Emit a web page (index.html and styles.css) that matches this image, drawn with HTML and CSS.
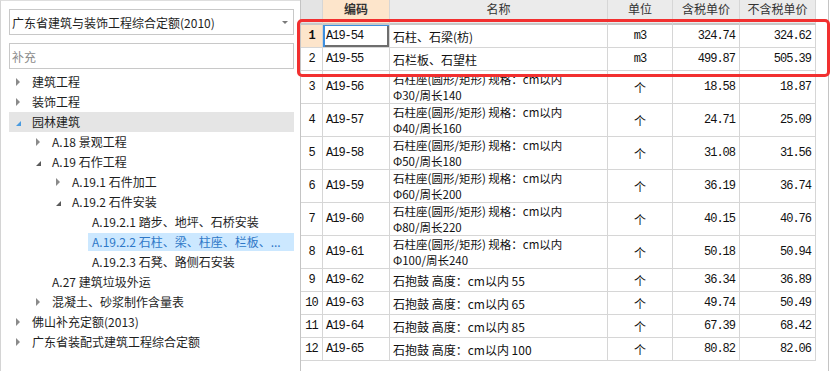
FILE: index.html
```html
<!DOCTYPE html>
<html lang="zh-CN">
<head>
    <meta charset="UTF-8">
    <link rel="stylesheet" href="styles.css">
    <title>定额库</title>
</head>
<body>
    <div class="app">
        <!-- left: quota library tree -->
        <div class="side">
            <div class="select">
                <span>广东省建筑与装饰工程综合定额(2010)</span>
                <span class="caret"></span>
            </div>
            <input class="search" type="text" placeholder="补充">
            <ul class="tree">
                <li class="node lv0"><span class="tw closed"></span><span class="label">建筑工程</span></li>
                <li class="node lv0"><span class="tw closed"></span><span class="label">装饰工程</span></li>
                <li class="node lv0 hover"><span class="tw open"></span><span class="label">园林建筑</span></li>
                <li class="node lv1"><span class="tw closed"></span><span class="label">A.18 景观工程</span></li>
                <li class="node lv1"><span class="tw open"></span><span class="label">A.19 石作工程</span></li>
                <li class="node lv2"><span class="tw closed"></span><span class="label">A.19.1 石件加工</span></li>
                <li class="node lv2"><span class="tw open"></span><span class="label">A.19.2 石件安装</span></li>
                <li class="node lv3"><span class="tw"></span><span class="label">A.19.2.1 踏步、地坪、石桥安装</span></li>
                <li class="node lv3 selected"><span class="tw"></span><span class="label">A.19.2.2 石柱、梁、柱座、栏板、...</span></li>
                <li class="node lv3"><span class="tw"></span><span class="label">A.19.2.3 石凳、路侧石安装</span></li>
                <li class="node lv1"><span class="tw"></span><span class="label">A.27 建筑垃圾外运</span></li>
                <li class="node lv1"><span class="tw closed"></span><span class="label">混凝土、砂浆制作含量表</span></li>
                <li class="node lv0"><span class="tw closed"></span><span class="label">佛山补充定额(2013)</span></li>
                <li class="node lv0"><span class="tw closed"></span><span class="label">广东省装配式建筑工程综合定额</span></li>
            </ul>
        </div>

        <!-- right: quota items grid -->
        <div class="main">
            <div class="row head">
                <div class="cell"></div>
                <div class="cell sorted"><span>编码</span></div>
                <div class="cell"><span>名称</span></div>
                <div class="cell"><span>单位</span></div>
                <div class="cell"><span>含税单价</span></div>
                <div class="cell"><span>不含税单价</span></div>
            </div>
            <div class="row current">
                <div class="cell no mono">1</div>
                <div class="cell code mono focus">A19-54</div>
                <div class="cell name">石柱、石梁(枋)</div>
                <div class="cell unit mono">m3</div>
                <div class="cell price mono">324.74</div>
                <div class="cell price mono">324.62</div>
            </div>
            <div class="row">
                <div class="cell no mono">2</div>
                <div class="cell code mono">A19-55</div>
                <div class="cell name">石栏板、石望柱</div>
                <div class="cell unit mono">m3</div>
                <div class="cell price mono">499.87</div>
                <div class="cell price mono">505.39</div>
            </div>
            <div class="row tall">
                <div class="cell no mono">3</div>
                <div class="cell code mono">A19-56</div>
                <div class="cell name"><span class="txt">石柱座(圆形/矩形) 规格：cm以内<br>Φ30/周长140</span></div>
                <div class="cell unit">个</div>
                <div class="cell price mono">18.58</div>
                <div class="cell price mono">18.87</div>
            </div>
            <div class="row tall">
                <div class="cell no mono">4</div>
                <div class="cell code mono">A19-57</div>
                <div class="cell name"><span class="txt">石柱座(圆形/矩形) 规格：cm以内<br>Φ40/周长160</span></div>
                <div class="cell unit">个</div>
                <div class="cell price mono">24.71</div>
                <div class="cell price mono">25.09</div>
            </div>
            <div class="row tall">
                <div class="cell no mono">5</div>
                <div class="cell code mono">A19-58</div>
                <div class="cell name"><span class="txt">石柱座(圆形/矩形) 规格：cm以内<br>Φ50/周长180</span></div>
                <div class="cell unit">个</div>
                <div class="cell price mono">31.08</div>
                <div class="cell price mono">31.56</div>
            </div>
            <div class="row tall">
                <div class="cell no mono">6</div>
                <div class="cell code mono">A19-59</div>
                <div class="cell name"><span class="txt">石柱座(圆形/矩形) 规格：cm以内<br>Φ60/周长200</span></div>
                <div class="cell unit">个</div>
                <div class="cell price mono">36.19</div>
                <div class="cell price mono">36.74</div>
            </div>
            <div class="row tall">
                <div class="cell no mono">7</div>
                <div class="cell code mono">A19-60</div>
                <div class="cell name"><span class="txt">石柱座(圆形/矩形) 规格：cm以内<br>Φ80/周长220</span></div>
                <div class="cell unit">个</div>
                <div class="cell price mono">40.15</div>
                <div class="cell price mono">40.76</div>
            </div>
            <div class="row tall">
                <div class="cell no mono">8</div>
                <div class="cell code mono">A19-61</div>
                <div class="cell name"><span class="txt">石柱座(圆形/矩形) 规格：cm以内<br>Φ100/周长240</span></div>
                <div class="cell unit">个</div>
                <div class="cell price mono">50.18</div>
                <div class="cell price mono">50.94</div>
            </div>
            <div class="row">
                <div class="cell no mono">9</div>
                <div class="cell code mono">A19-62</div>
                <div class="cell name">石抱鼓 高度：cm以内 55</div>
                <div class="cell unit">个</div>
                <div class="cell price mono">36.34</div>
                <div class="cell price mono">36.89</div>
            </div>
            <div class="row">
                <div class="cell no mono">10</div>
                <div class="cell code mono">A19-63</div>
                <div class="cell name">石抱鼓 高度：cm以内 65</div>
                <div class="cell unit">个</div>
                <div class="cell price mono">49.74</div>
                <div class="cell price mono">50.49</div>
            </div>
            <div class="row">
                <div class="cell no mono">11</div>
                <div class="cell code mono">A19-64</div>
                <div class="cell name">石抱鼓 高度：cm以内 85</div>
                <div class="cell unit">个</div>
                <div class="cell price mono">67.39</div>
                <div class="cell price mono">68.42</div>
            </div>
            <div class="row">
                <div class="cell no mono">12</div>
                <div class="cell code mono">A19-65</div>
                <div class="cell name">石抱鼓 高度：cm以内 100</div>
                <div class="cell unit">个</div>
                <div class="cell price mono">80.82</div>
                <div class="cell price mono">82.06</div>
            </div>

            <!-- red annotation box over rows 1-2 -->
            <div class="mark"></div>
        </div>
    </div>
</body>
</html>
```

FILE: styles.css
```css
body {
    margin: 0;
    background-color: #fff;
    font-family: "Noto Sans CJK SC", "Microsoft YaHei", sans-serif;
    font-size: 12px;
    color: #1e1e1e;
}

.app {
    display: flex;
    width: 829px;
    height: 371px;
}

/* left panel */
.side {
    width: 300px;
    box-sizing: border-box;
    padding: 8px 6px 0 8px;
    border-left: 1px solid #d4d4d4;
    border-top: 1px solid #dedede;
}

.select {
    height: 26px;
    box-sizing: border-box;
    border: 1px solid #c8c8c8;
    padding: 0 5px 0 2px;
    display: flex;
    align-items: center;
    justify-content: space-between;
    white-space: nowrap;
}

.caret {
    width: 0;
    height: 0;
    border-top: 3px solid #7a7a7a;
    border-left: 3px solid transparent;
    border-right: 3px solid transparent;
}

.search {
    display: block;
    width: 100%;
    height: 26px;
    box-sizing: border-box;
    margin: 8px 0 0;
    border: 1px solid #c8c8c8;
    padding: 0 2px;
    font-family: inherit;
    font-size: 12px;
    outline: none;
}

.search::placeholder {
    color: #8c8c8c;
}

.tree {
    list-style: none;
    margin: 3px 0 0;
    padding: 0;
}

.node {
    height: 20px;
    display: flex;
    align-items: center;
}

.lv0 { padding-left: 7px; }
.lv1 { padding-left: 27px; }
.lv2 { padding-left: 47px; }
.lv3 { padding-left: 67px; }

.tw {
    width: 12px;
    flex-shrink: 0;
    display: flex;
    align-items: center;
}

.tw.closed::before {
    content: "";
    border-left: 4px solid #8a8a8a;
    border-top: 4px solid transparent;
    border-bottom: 4px solid transparent;
}

.tw.open::before {
    content: "";
    margin-top: 2px;
    border-bottom: 5px solid #5a5a5a;
    border-left: 5px solid transparent;
}

.label {
    flex: 1;
    min-width: 0;
    line-height: 18px;
    padding: 0 4px;
    white-space: nowrap;
}

.node.hover {
    background-color: #e5e5e5;
}

.node.hover .tw.open::before {
    border-bottom-color: #4a9be0;
}

.node.selected .label {
    background-color: #cce8ff;
    color: #2f78c8;
}

/* right panel: grid of quota items */
.main {
    position: relative;
    width: 529px;
    box-sizing: border-box;
    border-left: 1px solid #c4c4c4;
    border-right: 1px solid #c4c4c4;
}

.row {
    display: grid;
    grid-template-columns: 22px 67px 218px 65px 67px 76px;
    width: 515px;
    height: 23px;
}

.row.head {
    height: 25px;
}

.row.tall {
    height: 33px;
}

.cell {
    box-sizing: border-box;
    border-right: 1px solid #d6d6d6;
    border-bottom: 1px solid #d6d6d6;
    padding: 0 3px;
    display: flex;
    align-items: center;
    white-space: nowrap;
    overflow: hidden;
}

.head .cell {
    background-color: #ebebeb;
    border-bottom: 2px solid #c8c8c8;
    justify-content: center;
    align-items: flex-start;
    color: #333;
}

.head .cell span {
    margin-top: 1px;
    line-height: 16px;
}

.head .cell:first-child {
    background-color: #e4e4e4;
}

.head .sorted {
    background-color: #fde5cb;
    font-weight: bold;
}

.mono {
    font-family: "Liberation Mono", "Noto Sans CJK SC", monospace;
    letter-spacing: -1px;
    color: #111;
}

.no {
    justify-content: center;
    padding: 0;
}

.current .no {
    background-color: #fde5cb;
    font-weight: bold;
}

.focus {
    box-shadow: inset 2px 1px 0 #3d8fe0, inset -2px -2px 0 #6e6e6e;
}

.name {
    color: #111;
}

.name .txt {
    font-size: 11.5px;
    line-height: 16px;
}

.unit {
    justify-content: center;
    color: #111;
}

.price {
    justify-content: flex-end;
    padding-right: 4px;
}

.mark {
    position: absolute;
    left: -4px;
    top: 19px;
    width: 533px;
    height: 58px;
    box-sizing: border-box;
    border: 3px solid #f23030;
    border-radius: 5px;
}
```
